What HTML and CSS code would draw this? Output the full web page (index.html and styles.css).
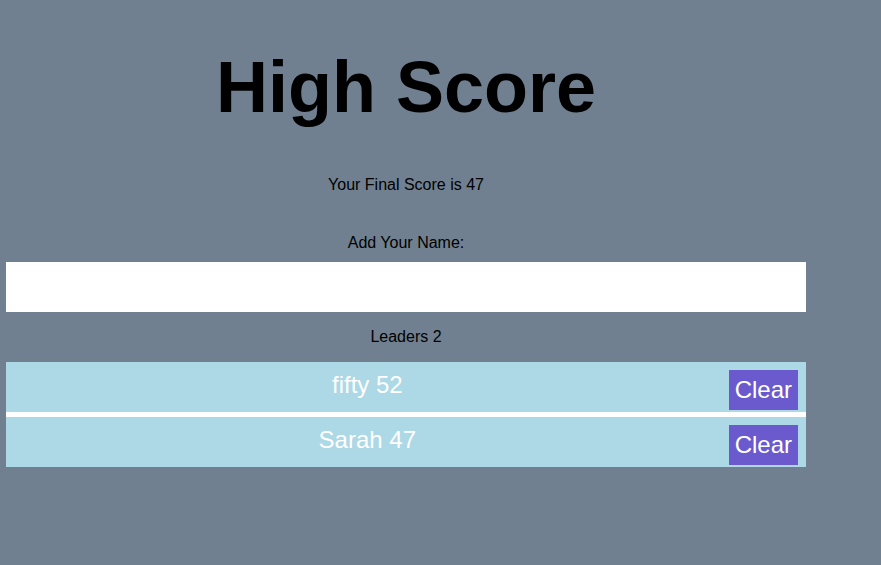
FILE: index.html
```html
<!DOCTYPE html>
<html>
<head>
<meta charset="utf-8">
<title>High Score</title>
<link rel="stylesheet" href="styles.css">
</head>
<body>
<main class="page">
  <h1 class="title">High Score</h1>
  <p class="final">Your Final Score is 47</p>
  <label class="name-label" for="name">Add Your Name:</label>
  <input class="name-input" id="name" type="text">
  <p class="leaders">Leaders 2</p>
  <ul class="board">
    <li class="row"><span class="row-text">fifty 52</span><button class="clear">Clear</button></li>
    <li class="row"><span class="row-text">Sarah 47</span><button class="clear">Clear</button></li>
  </ul>
</main>
</body>
</html>
```

FILE: styles.css
```css
html, body {
  margin: 0;
  padding: 0;
  background: #708090;
  font-family: "Liberation Sans", Arial, sans-serif;
  color: #000;
}

.page {
  width: 800px;
  margin-left: 6px;
  display: flex;
  flex-direction: column;
  text-align: center;
}

.title {
  margin: 46px 0 0;
  font-size: 72px;
  font-weight: bold;
  line-height: 83px;
}

.final {
  margin: 47px 0 0;
  font-size: 16px;
  line-height: 18px;
}

.name-label {
  display: block;
  margin-top: 40px;
  font-size: 16px;
  line-height: 18px;
}

.name-input {
  display: block;
  box-sizing: border-box;
  width: 800px;
  height: 50px;
  margin: 10px 0 0;
  border: none;
  background: #fff;
  padding: 0 8px;
  font-size: 20px;
  font-family: inherit;
  outline: none;
}

.leaders {
  margin: 16px 0 0;
  font-size: 16px;
  line-height: 18px;
}

.board {
  list-style: none;
  margin: 16px 0 0;
  padding: 0;
  display: flex;
  flex-direction: column;
  gap: 5px;
  background: #fff;
}

.row {
  display: flex;
  align-items: center;
  height: 50px;
  background: #add8e6;
  color: #fff;
  font-size: 24px;
}

.row-text {
  flex: 1;
  text-align: center;
  padding-bottom: 4px;
}

.clear {
  align-self: flex-start;
  margin: 8px 8px 0 0;
  height: 40px;
  padding: 0 6px 2px;
  border: none;
  background: #6a5acd;
  color: #fff;
  font-family: "Liberation Sans", Arial, sans-serif;
  font-size: 24px;
  line-height: 27px;
}
```
